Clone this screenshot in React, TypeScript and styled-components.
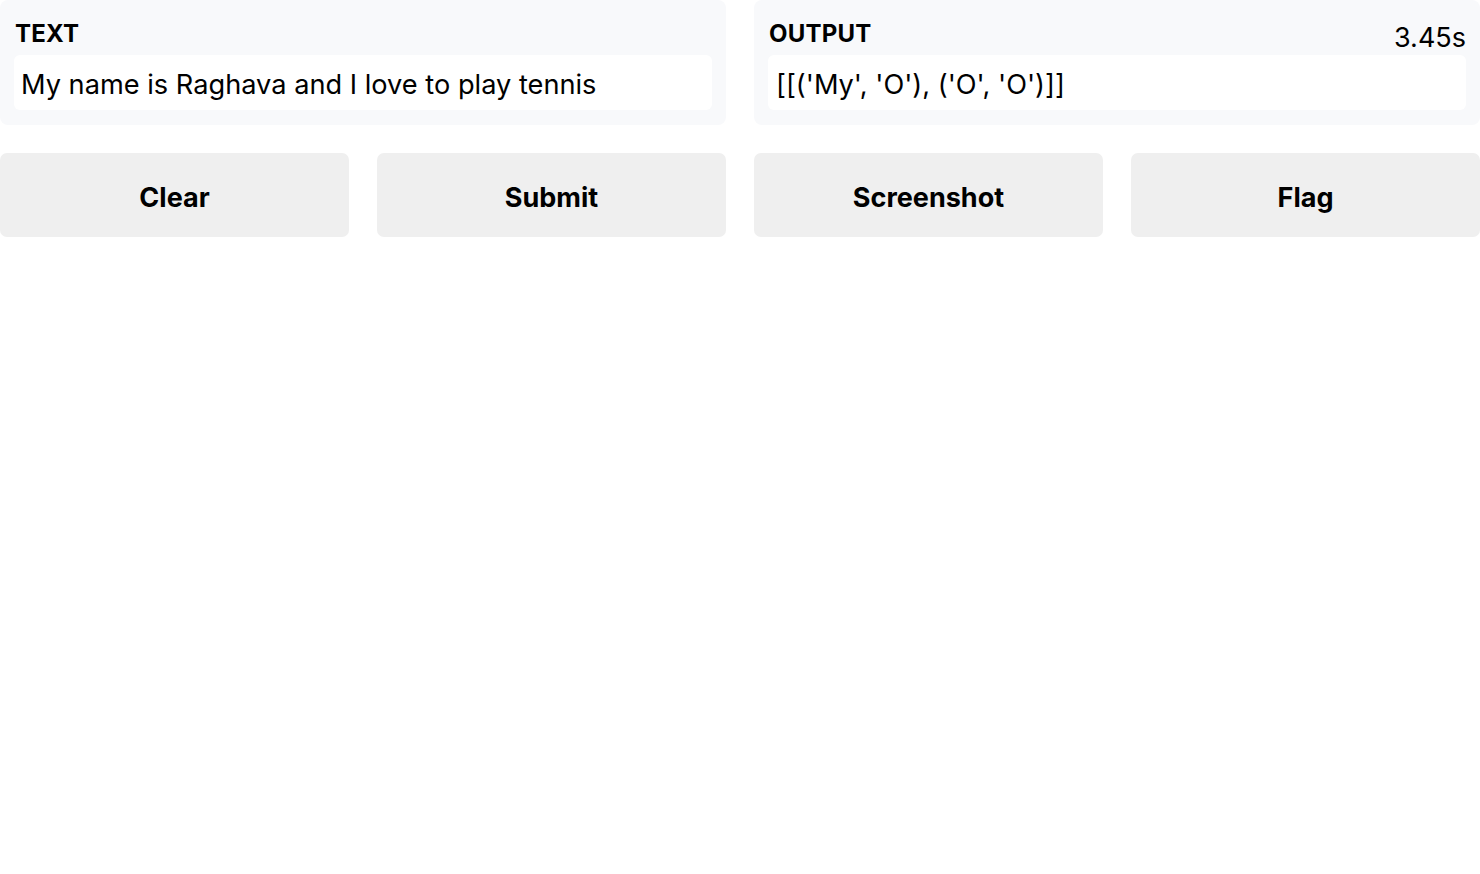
import React from "react";
import styled, { createGlobalStyle } from "styled-components";

const Global = createGlobalStyle`
  html, body { margin: 0; padding: 0; background: #ffffff; }
  body { font-family: Inter, "Liberation Sans", Arial, sans-serif; color: #000; }
`;

const Page = styled.div`
  display: flex;
  flex-direction: column;
  gap: 28px;
  width: 1480px;
`;

const Panels = styled.div`
  display: grid;
  grid-template-columns: 1fr 1fr;
  gap: 28px;
`;

const Panel = styled.div`
  position: relative;
  background: #f8f9fb;
  border-radius: 8px;
  padding: 20px 14px 15px 14px;
  display: flex;
  flex-direction: column;
  gap: 8px;
`;

const Label = styled.div`
  font-size: 24px;
  font-weight: 700;
  line-height: 27px;
  letter-spacing: 0.2px;
  padding-left: 1px;
`;

const Field = styled.div<{ $pad: number }>`
  background: #ffffff;
  border-radius: 6px;
  height: 55px;
  box-sizing: border-box;
  padding-top: 5px;
  display: flex;
  align-items: center;
  padding-left: ${(p) => p.$pad}px;
  font-size: 27.2px;
  line-height: 32px;
`;

const Timer = styled.div`
  position: absolute;
  top: 22px;
  right: 14px;
  font-size: 27px;
  line-height: 32px;
`;

const Buttons = styled.div`
  display: grid;
  grid-template-columns: repeat(4, 1fr);
  gap: 28px;
`;

const Button = styled.button`
  height: 84px;
  border: none;
  border-radius: 7px;
  background: #efefef;
  font-family: inherit;
  font-size: 27px;
  font-weight: 700;
  color: #000;
  padding: 4px 0 0 0;
  cursor: pointer;
`;

export default function App() {
  return (
    <>
      <Global />
      <Page>
        <Panels>
          <Panel>
            <Label>TEXT</Label>
            <Field $pad={7}>My name is Raghava and I love to play tennis</Field>
          </Panel>
          <Panel>
            <Label>OUTPUT</Label>
            <Timer>3.45s</Timer>
            <Field $pad={8}>[[('My', 'O'), ('O', 'O')]]</Field>
          </Panel>
        </Panels>
        <Buttons>
          <Button>Clear</Button>
          <Button>Submit</Button>
          <Button>Screenshot</Button>
          <Button>Flag</Button>
        </Buttons>
      </Page>
    </>
  );
}
